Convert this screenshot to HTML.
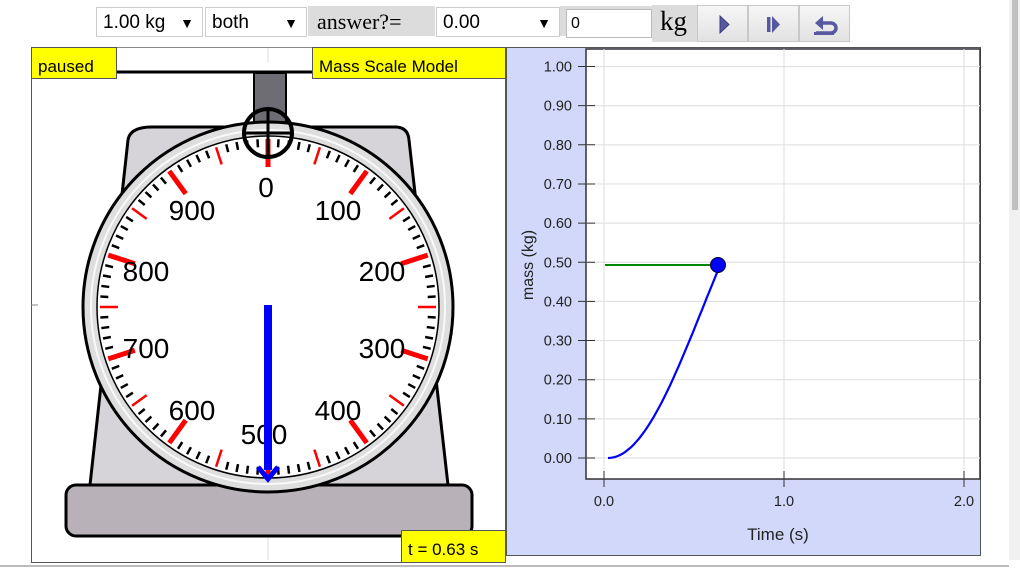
<!DOCTYPE html>
<html><head><meta charset="utf-8"><style>
body{margin:0;width:1020px;height:574px;overflow:hidden;background:#fff;font-family:"Liberation Sans",sans-serif;position:relative}
.ab{position:absolute;box-sizing:border-box}
.sel{background:#fff;border:1px solid #ccc;font-size:19px;padding:0 6px;line-height:30px;height:30px;top:7px}
.ar{position:absolute;right:8px;top:0;font-size:14px}
.gray{background:#dcdcdc;top:6px;height:30px}
.btn{top:5px;height:37px;width:51px;border:1px solid #c8c8c8;background:linear-gradient(#f6f6f6,#e2e2e2)}
.yl{background:#ff0;border:1px solid #555;font-size:17px;padding-left:6px;line-height:24px;padding-top:7px}
</style></head><body>
<div class="ab sel" style="left:96px;width:107px">1.00 kg<span class="ar">▼</span></div>
<div class="ab sel" style="left:205px;width:102px">both<span class="ar">▼</span></div>
<div class="ab gray" style="left:308px;width:127px;font-family:'Liberation Serif',serif;font-size:22px;line-height:32px;padding-left:9px">answer?=</div>
<div class="ab sel" style="left:436px;width:124px">0.00<span class="ar">▼</span></div>
<div class="ab gray" style="left:560px;width:92px"></div>
<div class="ab" style="left:566px;top:9px;width:86px;height:29px;border:1px solid #bbb;background:#fff;font-size:16px;line-height:27px;padding-left:4px">0</div>
<div class="ab gray" style="left:652px;width:45px;top:5px;height:37px;font-family:'Liberation Serif',serif;font-size:27px;line-height:32px;padding-left:8px">kg</div>
<div class="ab btn" style="left:697px"><svg width="51" height="37"><path d="M22 10 L31 18.5 L22 27Z" fill="#5658a0" stroke="#3c3e80"/></svg></div>
<div class="ab btn" style="left:748px"><svg width="51" height="37"><rect x="18" y="11" width="3.5" height="15" fill="#5658a0"/><path d="M23 10 L31 18.5 L23 27Z" fill="#5658a0"/></svg></div>
<div class="ab btn" style="left:799px"><svg width="51" height="37"><path d="M20 17 H31 a5 5 0 0 1 0 10 H16" fill="none" stroke="#5658a0" stroke-width="3.5"/><path d="M15 17 L23 10 L23 24Z" fill="#5658a0"/><rect x="14" y="26" width="20" height="3" fill="#5658a0"/></svg></div>

<div class="ab" style="left:31px;top:47px;width:475px;height:516px;border:1px solid #555;border-top-color:#888"></div>
<svg class="ab" style="left:0;top:0" width="506" height="574" id="sc">
<line x1="268" y1="48" x2="268" y2="560" stroke="#ddd"/>
<path d="M152 127 H395 Q408 127 409 140 L448 485 H90 L128 140 Q130 127 152 127Z" fill="#d6d4d8" stroke="#000" stroke-width="3"/>
<rect x="66" y="485" width="406" height="51" rx="10" fill="#b8b2b8" stroke="#000" stroke-width="3"/>
<rect x="115" y="62" width="198" height="11" fill="#fff"/>
<line x1="115" y1="72" x2="313" y2="72" stroke="#000" stroke-width="3"/>
<rect x="254" y="73" width="32" height="49" fill="#6e6d75" stroke="#000" stroke-width="2"/>
<circle cx="268" cy="307" r="185" fill="#dedede" stroke="#000" stroke-width="3"/>
<circle cx="268" cy="307" r="177" fill="none" stroke="#fff" stroke-width="2" opacity=".8"/>
<circle cx="268" cy="307" r="171" fill="#fff" stroke="#000" stroke-width="1.5"/>
<g id="ticks"></g>
<g font-size="28" text-anchor="middle" fill="#000" id="labs"></g>
<line x1="268" y1="305" x2="268" y2="470" stroke="#00f" stroke-width="8"/>
<path d="M258 467 L268 479 L278 467" fill="none" stroke="#00f" stroke-width="5"/>
<circle cx="268" cy="133" r="24" fill="none" stroke="#000" stroke-width="4"/>
<line x1="244" y1="133" x2="292" y2="133" stroke="#000" stroke-width="3"/>
<line x1="268" y1="109" x2="268" y2="157" stroke="#000" stroke-width="3"/>
<line x1="31" y1="305" x2="38" y2="305" stroke="#888"/>
</svg>
<div class="ab yl" style="left:31px;top:47px;width:86px;height:32px">paused</div>
<div class="ab yl" style="left:312px;top:47px;width:194px;height:32px">Mass Scale Model</div>
<div class="ab yl" style="left:401px;top:530px;width:105px;height:33px;padding-top:7px">t = 0.63 s</div>

<div class="ab" style="left:506px;top:47px;width:475px;height:509px;background:#d2d8fa;border:1px solid #555"></div>
<svg class="ab" style="left:506px;top:47px" width="475" height="509" id="gr" font-size="14.5" fill="#222">
<rect x="80" y="2" width="394" height="430" fill="#fff" stroke="#333" stroke-width="1.5"/>
</svg>
<div class="ab" style="left:1009px;top:0;width:11px;height:560px;background:#f1f1f1"></div>
<div class="ab" style="left:1012px;top:0;width:6px;height:210px;background:#c1c1c1"></div>
<div class="ab" style="left:0;top:565px;width:1009px;height:2px;background:#bbb"></div>
<script>
var ns="http://www.w3.org/2000/svg";
function el(p,t,a,txt){var e=document.createElementNS(ns,t);for(var k in a)e.setAttribute(k,a[k]);if(txt!=null)e.textContent=txt;p.appendChild(e);return e;}
var T=document.getElementById('ticks'),L=document.getElementById('labs'),cx=268,cy=307;
for(var i=0;i<100;i++){var a=i*3.6*Math.PI/180,s=Math.sin(a),c=-Math.cos(a);
var r1=168,r2,col="#000",w=2.5;
if(i%10==0){r2=140;col="#f00";w=5}else if(i%5==0){r2=150;col="#f00";w=2.5}else r2=160;
el(T,'line',{x1:cx+r1*s,y1:cy+r1*c,x2:cx+r2*s,y2:cy+r2*c,stroke:col,'stroke-width':w});}
var P=[[266,197],[338,220],[382,281],[382,358],[338,420],[264,444],[192,420],[146,358],[146,281],[192,220]];
for(var j=0;j<10;j++){el(L,'text',{x:P[j][0],y:P[j][1]},String(j*100));}
var G=document.getElementById('gr');
for(var k=0;k<=10;k++){var y=19.5+k*39.15;
el(G,'line',{x1:80,x2:474,y1:y,y2:y,stroke:"#e2e2e2","stroke-width":1.2});
el(G,'line',{x1:72,x2:89,y1:y,y2:y,stroke:"#333"});
el(G,'text',{x:66,y:y+5,'text-anchor':'end'},((10-k)/10).toFixed(2));}
for(var m=0;m<3;m++){var x=98+m*180;
el(G,'line',{x1:x,x2:x,y1:2,y2:432,stroke:"#e2e2e2","stroke-width":1.2});
el(G,'line',{x1:x,x2:x,y1:424,y2:440,stroke:"#333"});
el(G,'text',{x:x,y:459,'text-anchor':'middle'},m+".0");}
el(G,'text',{x:272,y:493,'text-anchor':'middle','font-size':17},"Time (s)");
el(G,'text',{x:0,y:0,'text-anchor':'middle','font-size':16,transform:'translate(27,218) rotate(-90)'},"mass (kg)");
el(G,'line',{x1:99,x2:212,y1:218,y2:218,stroke:"#080","stroke-width":2});
var d="";for(var q=0;q<=40;q++){var t=q/40*0.63,m2=0.5*(1-Math.cos(Math.PI*t/1.05))/(1-Math.cos(Math.PI*0.63/1.05)),X=102+t*180,Y=411-m2*391.5;d+=(q?"L":"M")+X.toFixed(1)+" "+Y.toFixed(1);}
el(G,'path',{d:d,fill:"none",stroke:"#00f","stroke-width":2.2});
el(G,'circle',{cx:212,cy:218,r:7.5,fill:"#00f",stroke:"#002"});
</script>
</body></html>
